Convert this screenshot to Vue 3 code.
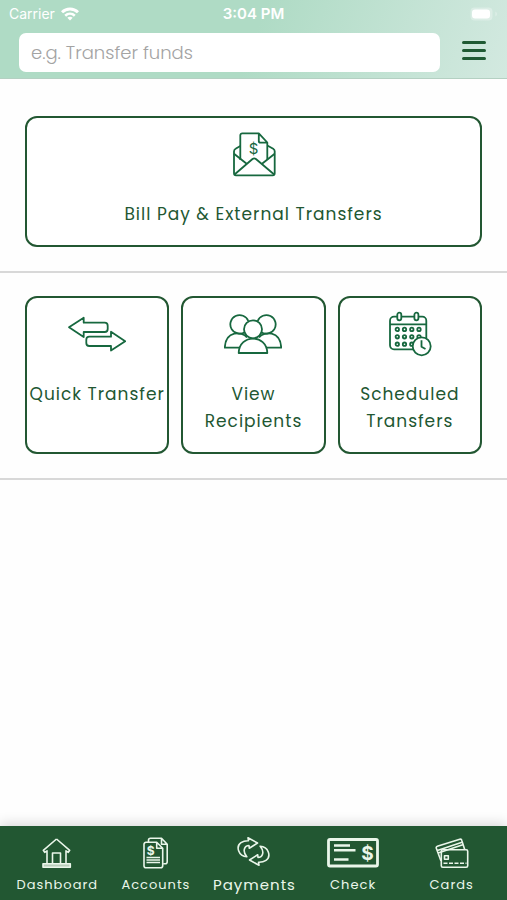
<template>
  <div class="screen">
    <header class="topbar">
      <div class="status">
        <div class="carrier">
          <span>Carrier</span>
          <svg width="18" height="14" viewBox="0 0 18 14" fill="none" stroke="#fff" stroke-width="3">
            <path d="M1 5.3C5.5.9 12.5.9 17 5.3" />
            <path d="M4.2 8.7c2.8-2.6 6.8-2.6 9.6 0" stroke-width="2.6" />
            <path d="M6.3 10.7c1.6-1.4 3.800-1.4 5.4 0L9 13.6z" fill="#fff" stroke="none" />
          </svg>
        </div>
        <span class="time">3:04 PM</span>
        <div class="battery">
          <svg width="28" height="14" viewBox="0 0 28 14">
            <rect x="0.5" y="0.5" width="22" height="13" rx="4" fill="#fff" fill-opacity="0.3" />
            <rect x="2" y="2.5" width="18" height="9" rx="3" fill="#fff" />
            <path d="M25.5 4.500c1.6.8 1.6 4.200 0 5z" fill="#fff" fill-opacity="0.4" />
          </svg>
        </div>
      </div>
      <div class="searchRow">
        <input class="search" type="text" placeholder="e.g. Transfer funds" aria-label="Search" />
        <button class="menu" type="button" aria-label="Menu">
          <span></span><span></span><span></span>
        </button>
      </div>
    </header>

    <main>
      <section class="group first">
        <button class="card wide" type="button">
          <svg class="cardIcon" width="44" height="46" viewBox="0 0 44 46">
            <path d="M8.3 29V4.3a2 2 0 0 1 2-2h16.500l8.500 9.200V29M26.800 2.500v7.500a1.700 1.700 0 0 0 1.700 1.700h6.500" />
            <path d="M8.3 15 3.6 17.800A3 3 0 0 0 2 20.500v21.800a2 2 0 0 0 2 2h36.700a2 2 0 0 0 2-2V20.500a3 3 0 0 0-1.500-2.700L35.300 14.500" />
            <path d="m2 22.700 13.300 10.600M42.700 22.700 29.400 33.300M2.500 43.500 20.500 28q1.700-1.300 3.400 0l18.300 15.500" />
            <text x="21.5" y="23" font-size="15">$</text>
          </svg>
          <span class="cardLabel">Bill Pay &amp; External Transfers</span>
        </button>
      </section>

      <section class="group tiles">
        <button class="card" type="button">
          <svg class="cardIcon" width="58" height="46" viewBox="0 -3 58 46">
            <path d="M1 13.3 15.7 3.7v5h21a3 3 0 0 1 3 3V15a3 3 0 0 1-3 3h-21v5z" />
            <path d="M57.2 27.2 43 17.7v5H21.300a3 3 0 0 0-3 3V29a3 3 0 0 0 3 3H43v4.500z" />
          </svg>
          <span class="cardLabel">Quick Transfer</span>
        </button>
        <button class="card" type="button">
          <svg class="cardIcon" width="58" height="46" viewBox="1 -2 58 46">
            <path d="M22 19a9.300 9.300 0 1 1 3.300-11M38 19a9.300 9.300 0 1 0-3.300-11" />
            <circle cx="30" cy="16.3" r="9" />
            <path d="M15.700 40c.5-19.300 28.100-19.300 28.600 0z" />
            <path d="M24 24.500C19 18 2.500 17.500 1.800 34.700h14.700M36 24.500c5-6.500 21.500-7 22.200 10.200H43.500" />
          </svg>
          <span class="cardLabel">View<br />Recipients</span>
        </button>
        <button class="card" type="button">
          <svg class="cardIcon" width="44" height="46" viewBox="0 0 44 46">
            <rect x="2" y="5.7" width="36.3" height="32.6" rx="4" />
            <path d="M2 13.300h36.300" />
            <rect class="solid" x="9.3" y="1.7" width="4" height="7.6" rx="2" />
            <rect class="solid" x="26.4" y="1.7" width="4" height="7.6" rx="2" />
            <circle v-for="dot in dots" :key="dot.id" :cx="dot.x" :cy="dot.y" r="1.7" />
            <circle class="solid" cx="33.7" cy="35.3" r="9" />
            <path d="M33.500 29.300v6.500l4 2.200" />
          </svg>
          <span class="cardLabel">Scheduled<br />Transfers</span>
        </button>
      </section>
    </main>

    <nav class="tabbar">
      <a href="#" class="tab">
        <svg width="30" height="32" viewBox="0 0 30 32">
          <path d="M14.500 2 1.300 13.300l1.400 2 2.300-1.500v12.700M14.500 2l13.200 11.300-1.400 2-2.300-1.500v12.700M10.500 26.500V16h8v10.500" />
          <rect x="1" y="26.700" width="27.300" height="3.600" fill="#b8cdbb" />
        </svg>
        <span>Dashboard</span>
      </a>
      <a href="#" class="tab">
        <svg width="28" height="32" viewBox="0 0 28 32">
          <path d="M6.500 5V3.300a2 2 0 0 1 2-2h11l5.700 6v17.400a2 2 0 0 1-2 2h-2M19.500 1.500v5.800H25" />
          <path d="M4 5.300h10.700l6 6v17.400a2 2 0 0 1-2 2H4a2 2 0 0 1-2-2V7.300a2 2 0 0 1 2-2zM14.700 5.500v5.800h5.800M4.500 20.500h13.500M4.500 23h13.500M4.500 25.500h13.500" />
          <text x="8.8" y="17.5" font-size="12" font-weight="700">$</text>
        </svg>
        <span>Accounts</span>
      </a>
      <a href="#" class="tab active">
        <svg width="34" height="32" viewBox="0 0 34 32">
          <path :d="cycleArrow" />
          <path :d="cycleArrow" transform="rotate(180 16.5 14.5)" />
        </svg>
        <span>Payments</span>
      </a>
      <a href="#" class="tab">
        <svg width="52" height="32" viewBox="0 -1 52 32">
          <rect x="1.5" y="1.5" width="49" height="26.5" rx="1.5" stroke-width="2.8" />
          <path d="M7 7.500h16M7 12.300h21.500M7 21.500h14.500" stroke-width="2.4" />
          <text x="40.6" y="21.500" font-size="19" font-weight="700">$</text>
        </svg>
        <span>Check</span>
      </a>
      <a href="#" class="tab">
        <svg width="34" height="32" viewBox="0 0 34 32">
          <path d="M6 24 1.300 11.300a1.500 1.500 0 0 1 1-2L24.800 2.200a1.500 1.500 0 0 1 1.900 1l3 9.200M2.300 13.500 27.800 5M3.200 16 28.500 7.500" />
          <rect x="6.3" y="12.7" width="26.4" height="17.6" rx="1.5" />
          <path d="M9.500 18.700h3.800v3.600H9.500z" />
          <path d="M8.500 26.300h23" stroke-dasharray="4 1.5" />
        </svg>
        <span>Cards</span>
      </a>
    </nav>
  </div>
</template>

<script setup>
// one half of the payments symbol, the other is the same path turned round
const cycleArrow = 'M9.8 19.800C1.500 19.500-1.500 9.500 4 5.700 6.200 4.200 8.500 3.700 11.500 3.800L11 .8 20.500 6 12.300 11.200 12 8.500C7.500 8.500 5 14 9.8 19.800z'

const dots = []
for (const y of [18.4, 25.8, 33.2]) {
  for (const x of [9.3, 16.5, 23.8, 31]) {
    dots.push({ id: x + '-' + y, x, y })
  }
}
</script>

<style>
body {
  margin: 0;
  background: #fefefe;
}
</style>

<style scoped>
.screen {
  display: flex;
  flex-direction: column;
  min-height: 100vh;
  font-family: Poppins, Inter, "Open Sans", sans-serif;
}
.topbar {
  box-sizing: border-box;
  height: 79px;
  background: linear-gradient(110deg, #afdbc5 50%, #d3e9e0 100%);
  border-bottom: 1px solid #b4d0c2;
}
.status {
  display: grid;
  grid-template-columns: 1fr auto 1fr;
  align-items: center;
  height: 27px;
  padding: 0 9px;
  color: #fff;
  font-family: Inter, sans-serif;
  font-size: 14px;
}
.carrier {
  display: flex;
  align-items: center;
  gap: 6px;
}
.time {
  font-weight: 600;
  font-size: 15px;
}
.battery {
  display: flex;
  justify-content: flex-end;
}
.searchRow {
  display: flex;
  align-items: center;
  gap: 22px;
  padding: 6px 21px 0 19px;
}
.search {
  box-sizing: border-box;
  flex: 1;
  min-width: 0;
  height: 39px;
  padding: 0 12px;
  border: 0;
  border-radius: 7px;
  background: #fff;
  color: #225732;
  font-family: inherit;
  font-size: 18px;
  font-weight: 300;
}
.search::placeholder {
  color: #a3a3a3;
  opacity: 1;
}
.menu {
  display: flex;
  flex-direction: column;
  gap: 5px;
  padding: 0 0 4px;
  border: 0;
  background: none;
}
.menu span {
  width: 24px;
  height: 3px;
  border-radius: 2px;
  background: #1f5a33;
}
.group {
  padding: 23px 25px 24px;
  border-bottom: 2px solid #d8d8d8;
}
.group.first {
  padding-top: 37px;
}
.tiles {
  display: grid;
  grid-template-columns: repeat(3, 1fr);
  gap: 12px;
}
.card {
  box-sizing: border-box;
  display: flex;
  flex-direction: column;
  align-items: center;
  gap: 24px;
  min-width: 0;
  min-height: 158px;
  padding: 13px 0 0;
  border: 2px solid #225732;
  border-radius: 12px;
  background: #fff;
  color: #225732;
  font-family: inherit;
}
.card.wide {
  width: 100%;
  min-height: 131px;
}
.cardIcon {
  fill: none;
  stroke: #17683f;
  stroke-width: 1.8;
  stroke-linejoin: round;
}
.cardIcon .solid {
  fill: #fff;
}
.cardLabel {
  font-size: 17px;
  line-height: 27px;
  letter-spacing: 1px;
  white-space: nowrap;
}
text {
  stroke: none;
  fill: #17683f;
  text-anchor: middle;
  font-family: Inter, sans-serif;
}
.tabbar {
  box-sizing: border-box;
  display: grid;
  grid-template-columns: repeat(5, 1fr);
  height: 74px;
  margin-top: auto;
  padding: 11px 6px 0 8px;
  background: #225732;
  box-shadow: 0 -2px 12px rgba(0, 0, 0, 0.16);
}
.tab {
  display: flex;
  flex-direction: column;
  align-items: center;
  gap: 6px;
  color: #eaf6ea;
  font-size: 13px;
  line-height: 20px;
  letter-spacing: 1px;
  text-decoration: none;
}
.tab.active {
  font-size: 15px;
}
.tab svg {
  fill: none;
  stroke: #eaf6ea;
  stroke-width: 1.6;
  stroke-linejoin: round;
}
.tab text {
  fill: #eaf6ea;
  letter-spacing: 0;
}
</style>
